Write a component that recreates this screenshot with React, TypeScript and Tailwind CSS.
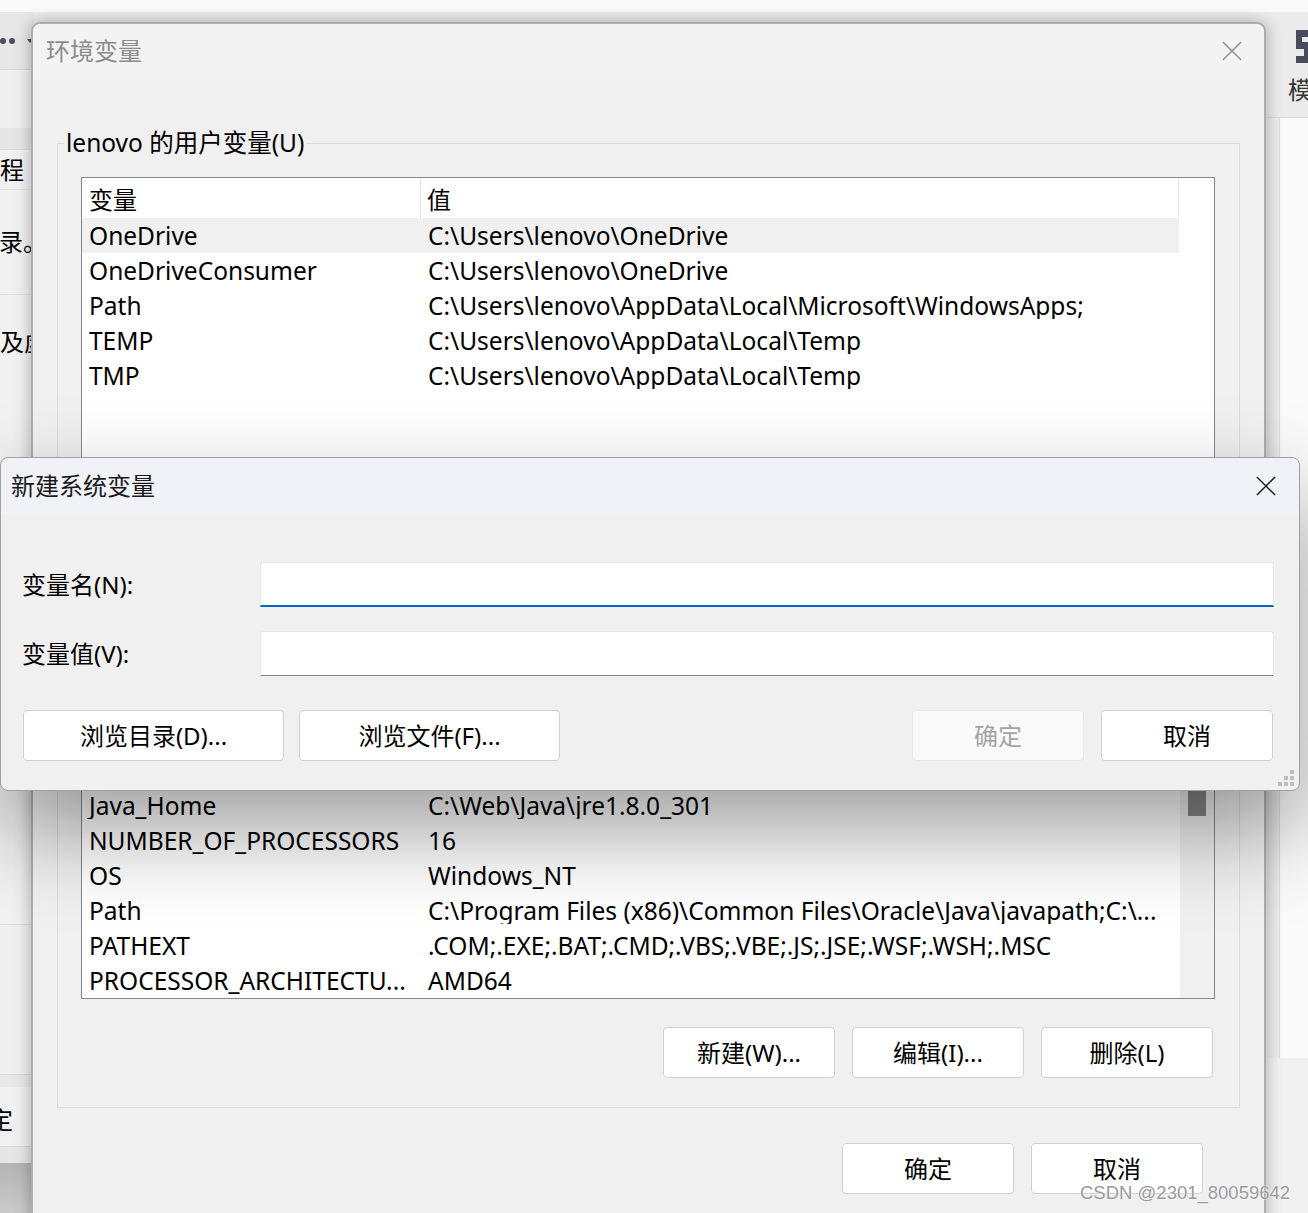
import React from 'react'

const userVars = [
  ['OneDrive', 'C:\\Users\\lenovo\\OneDrive'],
  ['OneDriveConsumer', 'C:\\Users\\lenovo\\OneDrive'],
  ['Path', 'C:\\Users\\lenovo\\AppData\\Local\\Microsoft\\WindowsApps;'],
  ['TEMP', 'C:\\Users\\lenovo\\AppData\\Local\\Temp'],
  ['TMP', 'C:\\Users\\lenovo\\AppData\\Local\\Temp'],
]

const sysVars = [
  ['ComSpec', 'C:\\Windows\\system32\\cmd.exe'],
  ['DriverData', 'C:\\Windows\\System32\\Drivers\\DriverData'],
  ['Java_Home', 'C:\\Web\\Java\\jre1.8.0_301'],
  ['NUMBER_OF_PROCESSORS', '16'],
  ['OS', 'Windows_NT'],
  ['Path', 'C:\\Program Files (x86)\\Common Files\\Oracle\\Java\\javapath;C:\\...'],
  ['PATHEXT', '.COM;.EXE;.BAT;.CMD;.VBS;.VBE;.JS;.JSE;.WSF;.WSH;.MSC'],
  ['PROCESSOR_ARCHITECTU...', 'AMD64'],
]

function XIcon({ className }: { className: string }) {
  return (
    <svg viewBox="0 0 22 22" className={className} fill="none" stroke="currentColor" strokeWidth="1.6">
      <path d="M1 1L21 21M21 1L1 21" />
    </svg>
  )
}

function Btn({
  children,
  className = '',
  disabled = false,
}: {
  children: React.ReactNode
  className?: string
  disabled?: boolean
}) {
  return (
    <div
      className={
        'flex h-[51px] items-center justify-center rounded-[4px] border ' +
        (disabled
          ? 'border-[#e8e8e8] bg-[#f9f9f9] text-[#a3a3a3] '
          : 'border-[#d0d0d0] bg-white text-black ') +
        className
      }
    >
      {children}
    </div>
  )
}

function Row({ name, value, selected = false }: { name: string; value: string; selected?: boolean }) {
  return (
    <div className={'flex h-[35px] w-[1097px] shrink-0 items-center pt-[2px] text-[24.5px] ' + (selected ? 'bg-[#f0f0f0]' : '')}>
      <div className="w-[339px] shrink-0 overflow-hidden whitespace-nowrap pl-[7px]">{name}</div>
      <div className="overflow-hidden whitespace-nowrap pl-[7px]">{value}</div>
    </div>
  )
}

function ListHeader() {
  return (
    <div className="flex h-[40px] w-[1097px] shrink-0 items-center border-r border-[#e5e5e5]">
      <div className="flex h-full w-[339px] shrink-0 items-center border-r border-[#e5e5e5] pl-[7px] pt-[3px]">变量</div>
      <div className="pl-[6px] pt-[3px]">值</div>
    </div>
  )
}

function Legend({ children }: { children: React.ReactNode }) {
  return <legend className="-ml-[17px] px-[2px] text-[24.5px] leading-[32px]">{children}</legend>
}

export default function App() {
  return (
    <div className="relative h-[1213px] w-[1308px] overflow-hidden bg-[#ececec] font-['Noto_Sans','Noto_Sans_CJK_SC',sans-serif] text-[24px] leading-none text-black">
      <div className="h-[12px] bg-[#fafafa]" />

      {/* background app, left column */}
      <div className="absolute bottom-0 left-0 top-[12px] flex w-[34px] flex-col overflow-hidden">
        <div className="flex h-[58px] shrink-0 items-center gap-[3px] border-b border-[#d6d6d6] bg-[#e7e7e7]">
          <span className="h-[6px] w-[6px] rounded-full bg-[#4b4b5a]" />
          <span className="h-[6px] w-[6px] rounded-full bg-[#4b4b5a]" />
          <svg viewBox="0 0 6 4" className="ml-[9px] h-[4px] w-[6px]">
            <path d="M0 0H6L3 4Z" fill="#4b4b5a" />
          </svg>
        </div>
        <div className="h-[58px] shrink-0 bg-[#efefef]" />
        <div className="h-[22px] shrink-0 border-b border-[#dcdcdc] bg-[#e5e5e5]" />
        <div className="flex h-[40px] shrink-0 items-center border-b border-[#e3e3e3] bg-[#f1f1f1] whitespace-nowrap">程</div>
        <div className="flex h-[105px] shrink-0 items-center border-b border-[#dedede] bg-[#f1f1f1] whitespace-nowrap">
          <span className="-ml-[1px]">录。</span>
        </div>
        <div className="flex h-[94px] shrink-0 items-center bg-[#f1f1f1] whitespace-nowrap">及虚</div>
        <div className="h-[536px] shrink-0 border-b border-[#dcdcdc] bg-[#f1f1f1]" />
        <div className="h-[150px] shrink-0 border-b border-[#dcdcdc] bg-[#efefef]" />
        <div className="h-[12px] shrink-0 bg-[#e8e8e8]" />
        <div className="flex h-[60px] shrink-0 items-center border-b border-[#d8d8d8] bg-[#f0f0f0] whitespace-nowrap">
          <span className="-ml-[11px] pt-[6px]">定</span>
        </div>
        <div className="h-[16px] shrink-0 bg-[#e6e6e6]" />
        <div className="flex-1 bg-gradient-to-b from-[#b4b4b4] to-[#cacaca]" />
      </div>

      {/* background app, right column */}
      <div className="absolute bottom-0 left-[1266px] right-0 top-[12px] flex flex-col">
        <div className="relative h-[106px] shrink-0 border-b border-[#dcdcdc] bg-[#ebebeb]">
          <svg viewBox="0 0 14 33" className="absolute left-[30px] top-[18px] h-[33px] w-[14px]" fill="#4a4a5c">
            <path d="M0 0H14V7H6V12H14V33H0V26H8V19H0Z" />
          </svg>
          <span className="absolute left-[22px] top-[66px] text-[#333]">模</span>
        </div>
        <div className="flex h-[940px] shrink-0">
          <div className="w-[13px] bg-[#ebebeb]" />
          <div className="flex-1 border-l border-[#e0e0e0] bg-[#fafafa]" />
        </div>
        <div className="flex-1 bg-[#f0f0f0]" />
      </div>

      {/* 环境变量 dialog */}
      <div className="absolute left-[31px] top-[22px] flex h-[1240px] w-[1235px] flex-col rounded-t-[9px] border-2 border-[#adadad] bg-[#f0f0f0] shadow-[0_0_16px_rgba(0,0,0,0.3)]">
        <div className="flex h-[56px] shrink-0 items-center justify-between rounded-t-[8px] bg-[#f3f3f3] pb-[3px] pl-[13px] pr-[22px]">
          <span className="text-[#8c8c8c]">环境变量</span>
          <XIcon className="h-[20px] w-[20px] text-[#8f8f8f]" />
        </div>
        <div className="flex flex-col px-[24px]">
          <fieldset className="mt-[47px] border border-[#dcdcdc] pb-[30px] pl-[23px] pr-[24px]">
            <Legend>lenovo 的用户变量(U)</Legend>
            <div className="mt-[18px] flex h-[330px] flex-col border border-[#828790] bg-white">
              <ListHeader />
              {userVars.map(([n, v], i) => (
                <Row key={n} name={n} value={v} selected={i === 0} />
              ))}
            </div>
            <div className="mr-[2px] mt-[28px] flex justify-end gap-[17px]">
              <Btn className="w-[172px]">新建(N)...</Btn>
              <Btn className="w-[172px]">编辑(E)...</Btn>
              <Btn className="w-[172px]">删除(D)</Btn>
            </div>
          </fieldset>

          <fieldset className="mt-[24px] border border-[#dcdcdc] pb-[29px] pl-[23px] pr-[24px]">
            <Legend>系统变量(S)</Legend>
            <div className="mt-[18px] flex h-[308px] border border-[#828790] bg-white">
              <div className="flex flex-1 flex-col justify-end overflow-hidden">
                <ListHeader />
                {sysVars.map(([n, v]) => (
                  <Row key={n} name={n} value={v} />
                ))}
              </div>
              <div className="flex w-[34px] shrink-0 flex-col items-center bg-[#f0f0f0]">
                <div className="mt-[64px] h-[60px] w-[18px] bg-[#878787]" />
              </div>
            </div>
            <div className="mr-[2px] mt-[28px] flex justify-end gap-[17px]">
              <Btn className="w-[172px]">新建(W)...</Btn>
              <Btn className="w-[172px]">编辑(I)...</Btn>
              <Btn className="w-[172px]">删除(L)</Btn>
            </div>
          </fieldset>

          <div className="mr-[37px] mt-[35px] flex justify-end gap-[17px]">
            <Btn className="w-[172px]">确定</Btn>
            <Btn className="w-[172px]">取消</Btn>
          </div>
        </div>
      </div>

      {/* 新建系统变量 dialog */}
      <div className="absolute left-0 top-[457px] flex h-[334px] w-[1300px] flex-col rounded-[8px] border border-[#a0a0a0] bg-[#f0f0f0] shadow-[0_40px_90px_rgba(0,0,0,0.38)]">
        <div className="flex h-[56px] shrink-0 items-center justify-between rounded-t-[8px] bg-[#f1f2f7] pl-[10px] pr-[23px]">
          <span className="text-[#1a1a1a]">新建系统变量</span>
          <XIcon className="h-[20px] w-[20px] text-[#1a1a1a]" />
        </div>
        <div className="flex flex-col pl-[21px] pr-[25px] pt-[48px]">
          <div className="flex items-center">
            <span className="w-[238px] shrink-0">变量名(N):</span>
            <div className="h-[45px] flex-1 rounded-t-[3px] border border-b-2 border-[#e6e6e6] border-b-[#0067c0] bg-white" />
          </div>
          <div className="mt-[24px] flex items-center">
            <span className="w-[238px] shrink-0">变量值(V):</span>
            <div className="h-[45px] flex-1 rounded-t-[3px] border border-[#e6e6e6] border-b-[#868686] bg-white" />
          </div>
        </div>
        <div className="mt-[34px] flex pl-[22px] pr-[26px]">
          <Btn className="w-[261px]">浏览目录(D)...</Btn>
          <Btn className="ml-[15px] w-[261px]">浏览文件(F)...</Btn>
          <Btn disabled className="ml-auto w-[172px]">确定</Btn>
          <Btn className="ml-[17px] w-[172px]">取消</Btn>
        </div>
        <svg viewBox="0 0 16 16" className="absolute bottom-[4px] right-[5px] h-[16px] w-[16px]" fill="#bdbdbd">
          <rect x="12" y="0" width="4" height="4" />
          <rect x="6" y="6" width="4" height="4" />
          <rect x="12" y="6" width="4" height="4" />
          <rect x="0" y="12" width="4" height="4" />
          <rect x="6" y="12" width="4" height="4" />
          <rect x="12" y="12" width="4" height="4" />
        </svg>
      </div>

      <div className="absolute left-[1080px] top-[1184px] font-['Liberation_Sans',sans-serif] text-[18.5px] text-[#9a9a9a] [text-shadow:0_0_2px_#fff,0_0_1px_#fff]">
        CSDN @2301_80059642
      </div>
    </div>
  )
}
